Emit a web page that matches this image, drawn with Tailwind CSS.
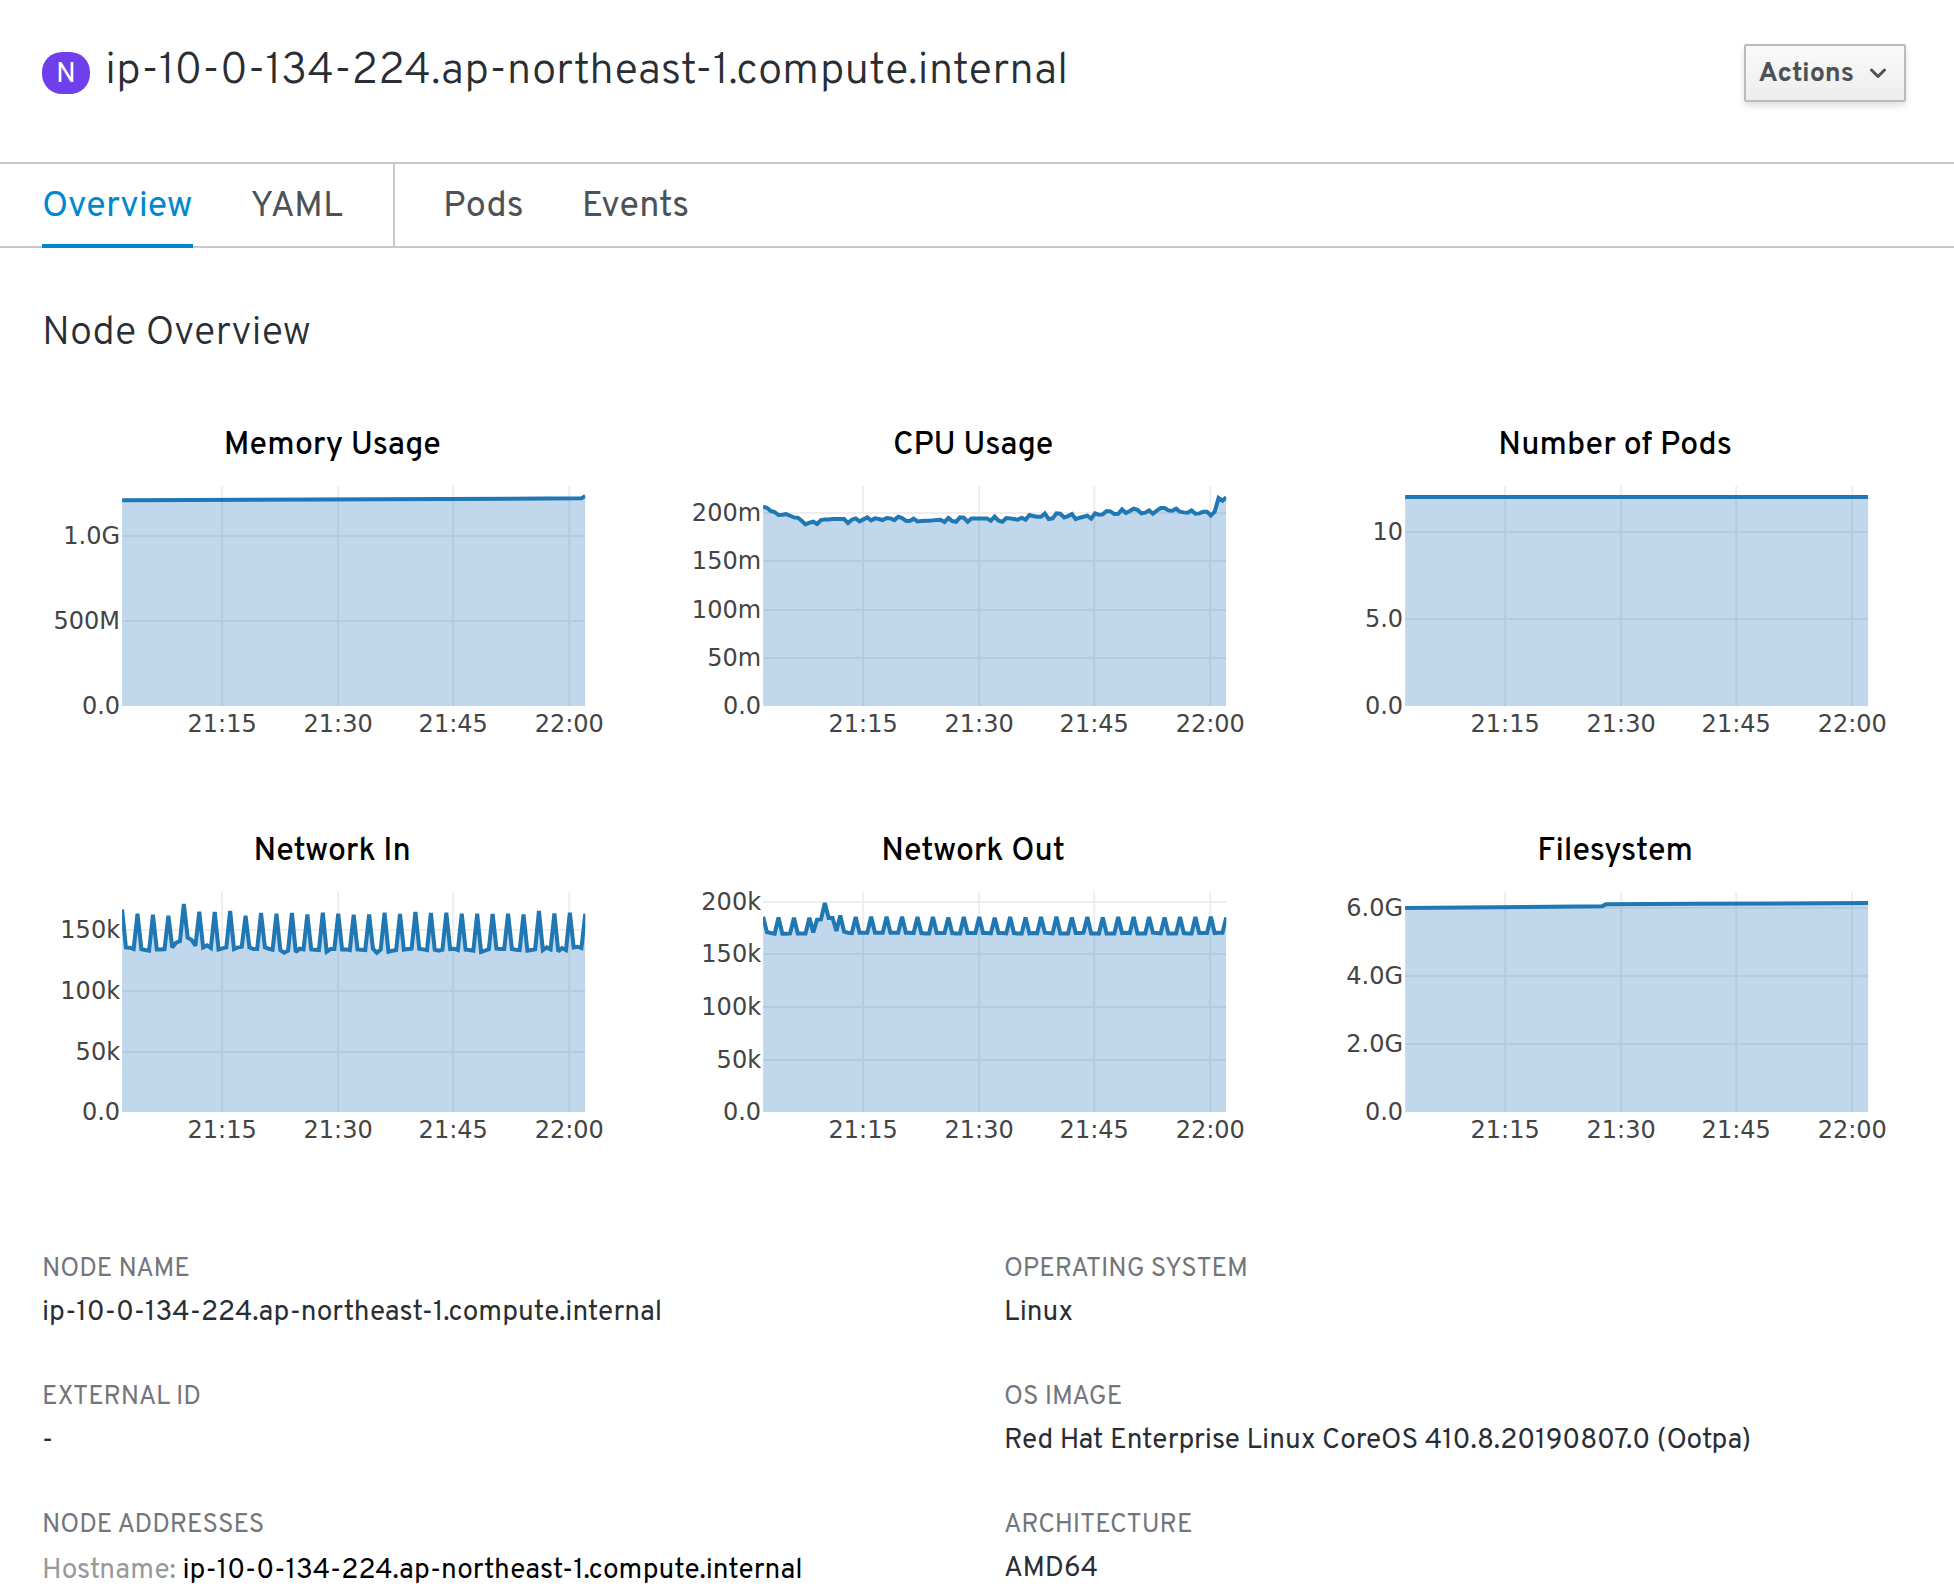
<!DOCTYPE html>
<html lang="en">
<head>
<meta charset="utf-8">
<meta name="viewport" content="width=device-width, initial-scale=1">
<title>Node details</title>
<script src="https://cdn.jsdelivr.net/npm/@tailwindcss/browser@4"></script>
</head>
<body class="min-h-screen overflow-x-hidden bg-white font-['Overpass','Roboto',sans-serif] text-[#292e34]">
<header class="flex items-start justify-between px-[42px] pt-11 pr-12 pb-[60px]">
  <h1 class="flex items-center gap-[15px] text-[44px] leading-[52px] font-light">
    <span class="mt-1 flex h-[42px] w-12 items-center justify-center rounded-[20px] bg-[#703fec] pt-1 text-[28px] leading-none font-normal text-white">N</span>
    <span class="pt-0.5">ip-10-0-134-224.ap-northeast-1.compute.internal</span>
  </h1>
  <button type="button" class="flex h-[58px] items-center gap-3.5 rounded-xs border-2 border-[#bbb] bg-linear-to-b from-[#fafafa] to-[#ededed] pt-0.5 pr-4 pl-3 text-[27px] leading-none font-bold text-[#4d5258] shadow-[0_4px_6px_rgba(3,3,3,0.12)]">
    Actions
    <svg class="h-5 w-5" viewBox="0 0 20 20" fill="none" stroke="currentColor" stroke-width="3" stroke-linecap="round" stroke-linejoin="round" aria-hidden="true"><path d="M3.5 6 10 12.500 16.500 6"/></svg>
  </button>
</header>

<nav class="flex h-[86px] items-stretch border-y-2 border-[#c9c9c9] pl-[42px] text-[36px] leading-[72px] text-[#4d5258]">
  <a href="#overview" class="-mb-0.5 border-b-4 border-[#0088ce] pt-[7px] text-[#0088ce]">Overview</a>
  <a href="#yaml" class="ml-[58px] pt-[7px] pr-[50px]">YAML</a>
  <a href="#pods" class="border-l-2 border-[#c9c9c9] pt-[7px] pl-12">Pods</a>
  <a href="#events" class="ml-[58px] pt-[7px]">Events</a>
</nav>

<main>
  <h2 class="px-[42px] pt-[62px] text-[40px] leading-[48px] font-light">Node Overview</h2>

  <section id="charts" class="grid grid-cols-3 gap-y-[46px] pt-[62px] pr-[18px] pl-3" aria-label="Node metrics"></section>

  <dl class="grid grid-cols-2 gap-y-11 px-[42px] pt-[65px] pr-0 text-[28px] leading-[40px]">
    <div><dt class="text-[26px] leading-[38px] text-[#72767b]">NODE NAME</dt><dd class="mt-1 mb-0.5">ip-10-0-134-224.ap-northeast-1.compute.internal</dd></div>
    <div class="pl-1.5"><dt class="text-[26px] leading-[38px] text-[#72767b]">OPERATING SYSTEM</dt><dd class="mt-1 mb-0.5">Linux</dd></div>
    <div><dt class="text-[26px] leading-[38px] text-[#72767b]">EXTERNAL ID</dt><dd class="mt-1 mb-0.5">-</dd></div>
    <div class="pl-1.5"><dt class="text-[26px] leading-[38px] text-[#72767b]">OS IMAGE</dt><dd class="mt-1 mb-0.5">Red Hat Enterprise Linux CoreOS 410.8.20190807.0 (Ootpa)</dd></div>
    <div><dt class="text-[26px] leading-[38px] text-[#72767b]">NODE ADDRESSES</dt><dd class="mt-1.5 text-black"><span class="text-[#999]">Hostname:</span> ip-10-0-134-224.ap-northeast-1.compute.internal</dd></div>
    <div class="pl-1.5"><dt class="text-[26px] leading-[38px] text-[#72767b]">ARCHITECTURE</dt><dd class="mt-1">AMD64</dd></div>
  </dl>
</main>

<script>
// Samples are taken every 30 s over an hour; each is [sample index, height],
// the height being measured from the zero line on a scale of 0 to 660.
const each = list => list.map((h, i) => [i, h]);

const cpu = each([
  598,595,585,582,573,574,576,571,566,565,556,545,550,553,546,558,560,560,561,561,
  561,561,549,559,563,554,560,566,557,563,561,558,564,563,558,568,564,556,555,562,
  554,555,556,556,557,558,559,552,564,555,553,566,565,553,563,563,563,563,563,556,
  568,556,553,564,563,561,559,565,559,573,570,568,568,578,561,563,578,577,566,570,
  576,561,565,568,571,562,578,574,575,585,584,576,577,590,579,585,592,589,578,580,
  587,577,586,594,594,587,586,592,583,581,580,587,577,578,583,583,572,583,624,616,626]);

const netIn = each([
  608,494,493,489, 595,489,486,484, 592,488,488,489, 589,494,508,513, 624,523,517,499,
  601,494,500,492, 600,488,491,494, 603,489,494,496, 589,494,489,489, 597,494,490,487,
  595,486,478,484, 597,480,490,488, 593,488,487,486, 598,481,489,489, 595,488,488,486,
  592,488,487,486, 593,490,478,488, 598,481,484,486, 594,487,489,490, 600,490,488,486,
  597,487,484,487, 598,489,490,486, 595,487,486,484, 595,480,484,488, 594,490,489,489,
  595,489,487,486, 593,484,486,488, 603,486,494,488, 596,482,492,486, 598,494,496,492, 595]);

const netOut = each([
  586,540,537,535, 584,535,535,536, 583,536,536,536, 583,539,577,578, 627,582,582,543,
  590,541,538,537, 585,538,538,538, 586,538,538,538, 586,538,538,538, 586,538,538,537,
  585,537,536,536, 585,537,537,537, 584,537,536,536, 585,537,537,537, 585,537,537,536,
  583,537,537,536, 585,537,536,536, 584,536,537,536, 585,538,537,536, 586,536,536,536,
  584,537,537,538, 585,536,536,535, 584,535,536,536, 585,537,538,537, 585,536,536,536,
  585,538,537,536, 584,536,536,536, 585,537,536,536, 585,537,537,537, 586,537,538,538, 584]);

const charts = [
  { title: 'Memory Usage',   ticks: [['1.0G',511],['500M',255],['0.0',0]], data: [[0,617],[119,623],[120,630]] },
  { title: 'CPU Usage',      ticks: [['200m',579],['150m',435],['100m',289],['50m',144],['0.0',0]], data: cpu },
  { title: 'Number of Pods', ticks: [['10',522],['5.0',261],['0.0',0]], data: [[0,627],[120,627]] },
  { title: 'Network In',     ticks: [['150k',545],['100k',363],['50k',181],['0.0',0]], data: netIn },
  { title: 'Network Out',    ticks: [['200k',631],['150k',474],['100k',315],['50k',157],['0.0',0]], data: netOut },
  { title: 'Filesystem',     ticks: [['6.0G',613],['4.0G',408],['2.0G',204],['0.0',0]], data: [[0,612],[51,617],[52,623],[75,625],[120,627]] },
];
const times = [['21:15',100],['21:30',216],['21:45',331],['22:00',447]];

// Plot area inside the 641 x 360 drawing.
const L = 110, T = 66, W = 463, H = 220, B = T + H;
const px = i => (L + i * W / 120).toFixed(2);
const py = h => (B - h / 3).toFixed(2);

document.getElementById('charts').innerHTML = charts.map((c, n) => {
  const line = c.data.map(([i, h]) => px(i) + ',' + py(h)).join(' ');
  return `<svg class="block w-full font-['Verdana','DejaVu_Sans',sans-serif] text-[24px]" viewBox="0 0 641 360" role="img" aria-label="${c.title}">
    <clipPath id="plot${n}"><rect x="${L}" y="${T}" width="${W}" height="${H}"/></clipPath>
    <text class="font-['Overpass','Roboto',sans-serif] text-[32px] font-medium" x="320" y="34" text-anchor="middle" fill="#000">${c.title}</text>
    <g stroke="#eee" stroke-width="2">
      ${times.map(t => `<path d="M${L + t[1]} ${T}V${B}"/>`).join('')}
      ${c.ticks.filter(t => t[1]).map(t => `<path d="M${L} ${Math.round(B - t[1] / 3)}H${L + W}"/>`).join('')}
    </g>
    <g clip-path="url(#plot${n})">
      <polygon points="${L},${B} ${line} ${L + W},${B}" fill="rgb(3,94,180)" fill-opacity="0.25"/>
      <polyline points="${line}" fill="none" stroke="#1f77b4" stroke-width="4" stroke-miterlimit="2"/>
    </g>
    <g fill="#444">
      ${times.map(t => `<text x="${L + t[1]}" y="${B + 26}" text-anchor="middle">${t[0]}</text>`).join('')}
      ${c.ticks.map(t => `<text x="${L - 2}" y="${Math.round(B - t[1] / 3) + 8}" text-anchor="end">${t[0]}</text>`).join('')}
    </g>
  </svg>`;
}).join('');
</script>
</body>
</html>
